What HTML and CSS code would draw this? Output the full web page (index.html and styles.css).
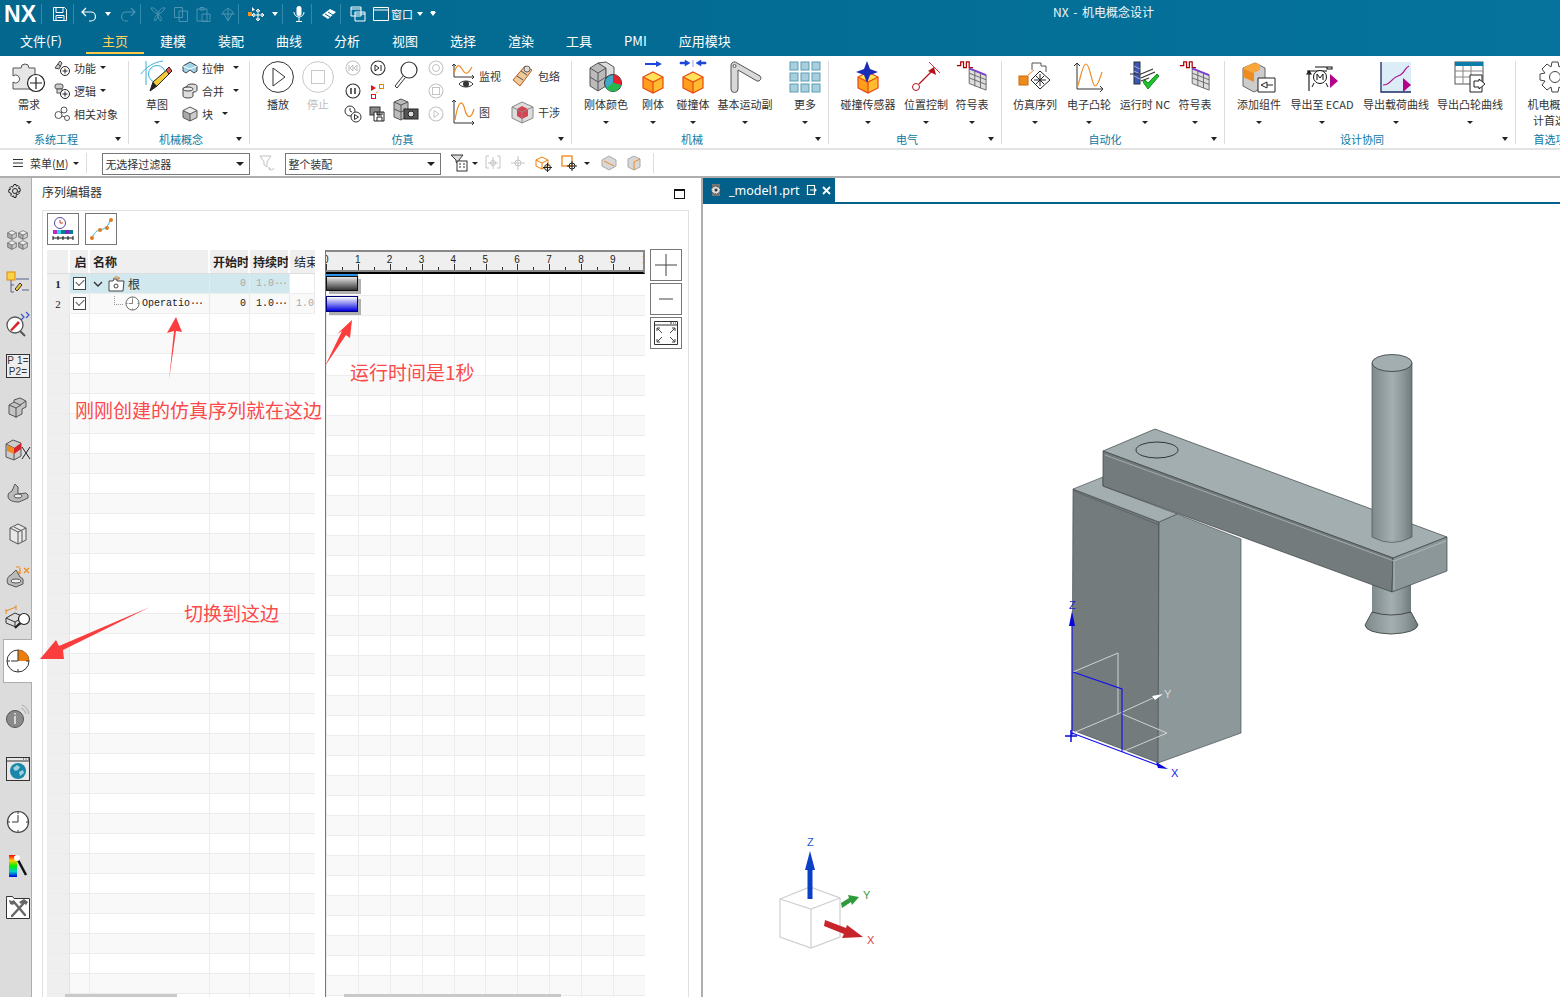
FILE: index.html
```html
<!DOCTYPE html>
<html lang="zh">
<head>
<meta charset="utf-8">
<title>NX - 机电概念设计</title>
<link rel="stylesheet" href="styles.css">
</head>
<body>
<svg class="defs" width="0" height="0">
  <defs>
    <linearGradient id="gy" x1="0" y1="0" x2="0" y2="1"><stop offset="0" stop-color="#ffe45c"/><stop offset="1" stop-color="#ff9a12"/></linearGradient>
    <linearGradient id="cyl" x1="0" y1="0" x2="1" y2="0"><stop offset="0" stop-color="#7d898b"/><stop offset=".5" stop-color="#a3afb1"/><stop offset=".75" stop-color="#8e9a9c"/><stop offset="1" stop-color="#6e7a7c"/></linearGradient>
    <linearGradient id="rain" x1="0" y1="0" x2="0" y2="1"><stop offset="0" stop-color="#f00"/><stop offset=".25" stop-color="#fc0"/><stop offset=".5" stop-color="#0e0"/><stop offset=".75" stop-color="#0cc"/><stop offset="1" stop-color="#00d"/></linearGradient>
    <symbol id="cube" viewBox="0 0 24 24"><path d="M12 2l10 5-10 5L2 7z" fill="#ffe25a"/><path d="M2 7l10 5v11L2 18z" fill="#ff9d1c"/><path d="M22 7l-10 5v11l10-5z" fill="#ffbc30"/><path d="M12 2l10 5v11l-10 5-10-5V7zM2 7l10 5 10-5M12 12v11" fill="none" stroke="#e9470f" stroke-width="1.2"/></symbol>
    <symbol id="graycube" viewBox="0 0 16 16"><path d="M8 1l7 3.500-7 3.500-7-3.500z" fill="#eee"/><path d="M1 4.500l7 3.500v7l-7-3.500z" fill="#aaa"/><path d="M15 4.500l-7 3.500v7l7-3.500z" fill="#ccc"/><path d="M8 1l7 3.500v7L8 15l-7-3.500v-7zM1 4.500l7 3.500 7-3.500M8 8v7" fill="none" stroke="#555"/></symbol>
    <symbol id="sym" viewBox="0 0 34 34"><path d="M1 6h4V2h3v6h3V2h3v6h4" fill="none" stroke="#a00" stroke-width="1.300"/><path d="M14 9l18 7v16l-18-7z" fill="#ddd" stroke="#666"/><path d="M14 9l18 7" stroke="#7a3fd0" stroke-width="2"/><path d="M14 14l18 7M14 19l18 7M20 11v17M26 14v16" stroke="#666" fill="none"/></symbol>
    <symbol id="clock" viewBox="0 0 24 24"><circle cx="12" cy="12" r="10.500" fill="#fff" stroke="#444" stroke-width="1.200"/><path d="M12 5v7H6M12 2v2M12 20v2M2 12h2M20 12h2" fill="none" stroke="#333"/></symbol>
    <symbol id="mini" viewBox="0 0 16 16"><circle cx="8" cy="8" r="7" fill="#fff" stroke="#333" stroke-width="1.100"/></symbol>
    <symbol id="minid" viewBox="0 0 16 16"><circle cx="8" cy="8" r="7" fill="#fff" stroke="#c4c4c4" stroke-width="1.100"/></symbol>
    <symbol id="ddcaret" viewBox="0 0 8 4"><path d="M0 0h8L4 4z" fill="#222"/></symbol>
  </defs>
</svg>

<header class="titlebar">
  <span class="nx">NX</span><i class="vsep"></i>
  <svg class="qa q-save" width="16" height="16" viewBox="0 0 16 16"><path d="M1.500 1.500h11l2 2v11h-13zM4 1.500v5h7v-5M4 14.500v-5h8v5M5.500 11.500h5" fill="none" stroke="#fff"/></svg>
  <i class="vsep v73"></i>
  <svg class="qa q-undo" width="16" height="14" viewBox="0 0 16 14"><path d="M5 1L1 5l4 4M1 5h9a4.500 4.500 0 010 9H8" fill="none" stroke="#fff" stroke-width="1.200"/></svg>
  <span class="wcaret c-undo"></span>
  <svg class="qa q-redo" width="16" height="14" viewBox="0 0 16 14"><path d="M11 1l4 4-4 4M15 5H6a4.500 4.500 0 000 9h2" fill="none" stroke="#4b93b2" stroke-width="1.200"/></svg>
  <i class="vsep v140"></i>
  <svg class="qa q-cut" width="16" height="16" viewBox="0 0 16 16"><path d="M8 8c3-1 6-3 7-6-3-1-6 2-7 6zM8 8C5 7 2 5 1 2c3-1 6 2 7 6zM8 8c-2 1-4 4-3 7 2-1 3-4 3-7zM8 8c2 1 4 4 3 7-2-1-3-4-3-7z" fill="none" stroke="#4b93b2"/></svg>
  <svg class="qa q-copy" width="16" height="16" viewBox="0 0 16 16"><path d="M1.500 1.500h8v10h-8zM6 5h8.500v10.500H6z" fill="none" stroke="#4b93b2"/></svg>
  <svg class="qa q-paste" width="16" height="16" viewBox="0 0 16 16"><path d="M2 3h10v12H2zM5 1.500h4V4H5zM7 8h8v7.500H7z" fill="none" stroke="#4b93b2"/></svg>
  <svg class="qa q-del" width="16" height="16" viewBox="0 0 16 16"><path d="M3 6l5-4 5 4-5 9zM1 8h14M8 2v13" fill="none" stroke="#4b93b2"/></svg>
  <i class="vsep v238"></i>
  <svg class="qa q-move" width="18" height="18" viewBox="0 0 18 18"><rect x="1" y="7" width="4" height="4" fill="#f7931e"/><path d="M5 2l3 3-3 1z" fill="#fff"/><path d="M11 4v12M5 10h12M11 4l-2 2h4zM11 16l-2-2h4zM5 10l2-2v4zM17 10l-2-2v4z" stroke="#fff" fill="#111"/></svg>
  <span class="wcaret c-move"></span>
  <i class="vsep v282"></i>
  <svg class="qa q-mic" width="12" height="18" viewBox="0 0 12 18"><rect x="3.500" y="1" width="5" height="10" rx="2.500" fill="#fff"/><path d="M1 7a5 5 0 0010 0M6 12v4M3 16.500h6" fill="none" stroke="#fff"/></svg>
  <i class="vsep v311"></i>
  <svg class="qa q-tape" width="16" height="12" viewBox="0 0 16 12"><path d="M1 7l8-6 6 3-8 7z" fill="#fff"/><path d="M4 6l5 3M7 4l5 3" stroke="#036e98"/></svg>
  <i class="vsep v340"></i>
  <svg class="qa q-win1" width="16" height="16" viewBox="0 0 16 16"><path d="M1 1h10v9H1zM5 6h10v9H5z" fill="#046f99" stroke="#fff"/><path d="M1 3h10M5 8h10" stroke="#fff"/></svg>
  <svg class="qa q-win2" width="16" height="16" viewBox="0 0 16 16"><path d="M.500 1.500h15v13H.500zM.500 4h15" fill="none" stroke="#fff"/></svg>
  <span class="win-label">窗口</span><span class="wcaret c-win"></span>
  <span class="wcaret c-more"></span>
  <span class="app-title">NX - 机电概念设计</span>
</header>

<nav class="menubar">
  <span class="tab first">文件(F)</span>
  <span class="tab active">主页</span>
  <span class="tab">建模</span><span class="tab">装配</span><span class="tab">曲线</span><span class="tab">分析</span><span class="tab">视图</span><span class="tab">选择</span><span class="tab">渲染</span><span class="tab">工具</span><span class="tab">PMI</span><span class="tab">应用模块</span>
</nav>

<section class="ribbon">
  <div class="group g1">
    <div class="gbody pl4">
      <div class="big w50">
        <svg class="ic" width="34" height="32" viewBox="0 0 34 32"><path d="M1 7h8a4 4 0 118 0h6v8a4 4 0 100 8v5H1v-7a4 4 0 100-6z" fill="#e6e6e6" stroke="#555"/><circle cx="24" cy="22" r="8.500" fill="#fff" stroke="#222" stroke-width="1.200"/><path d="M24 16v12M18 22h12" stroke="#222" stroke-width="1.200"/></svg>
        <span class="lab">需求</span><span class="caret"></span>
      </div>
      <div class="smalls">
        <div class="srow"><svg width="16" height="16" viewBox="0 0 16 16"><path d="M1 8l5-7 2 2-3 6zM4 4l3 3" fill="#ccc" stroke="#444"/><circle cx="11" cy="11" r="4.500" fill="#fff" stroke="#222"/><path d="M11 8.500v5M8.500 11h5" stroke="#222"/></svg><span class="slab">功能</span><span class="caret inl"></span></div>
        <div class="srow"><svg width="16" height="16" viewBox="0 0 16 16"><rect x="1" y="1" width="8" height="5" rx="2" fill="#ccc" stroke="#555"/><rect x="3" y="6" width="5" height="4" fill="#ddd" stroke="#555"/><circle cx="11" cy="11" r="4.500" fill="#fff" stroke="#222"/><path d="M11 8.500v5M8.500 11h5" stroke="#222"/></svg><span class="slab">逻辑</span><span class="caret inl"></span></div>
        <div class="srow"><svg width="16" height="16" viewBox="0 0 16 16"><circle cx="4.500" cy="9" r="3.500" fill="#fff" stroke="#555"/><circle cx="10" cy="4" r="3" fill="#fff" stroke="#555"/><circle cx="13" cy="12" r="2.500" fill="#fff" stroke="#555"/><path d="M7 7l1-1M8 10l3 1" stroke="#555"/></svg><span class="slab">相关对象</span></div>
      </div>
    </div>
    <div class="gfoot"><span class="gname">系统工程</span><span class="caret"></span></div>
  </div>

  <div class="group g2">
    <div class="gbody pl4">
      <div class="big w48">
        <svg class="ic" width="34" height="34" viewBox="0 0 34 34"><path d="M1 14C6 7 14 2 23 1M6 1v24" fill="none" stroke="#35b2d8"/><circle cx="17" cy="14" r="8.500" fill="none" stroke="#35b2d8"/><path d="M10 31l3-9 16-14 3 3-15 15z" fill="#f4c93a" stroke="#222"/><path d="M26 10l3-3 3 4-3 3z" fill="#e0525a" stroke="#222"/><path d="M10 31l3-9 4 4z" fill="#222"/></svg>
        <span class="lab">草图</span><span class="caret"></span>
      </div>
      <div class="smalls ml1">
        <div class="srow"><svg width="16" height="14" viewBox="0 0 16 14"><path d="M1 5l7-4 7 4v5l-3 2-4-3-4 3-3-2z" fill="#9fd3e8" stroke="#444"/><path d="M1 5l7 3 7-3" fill="none" stroke="#fff"/></svg><span class="slab">拉伸</span><span class="caret inl wide"></span></div>
        <div class="srow"><svg width="16" height="16" viewBox="0 0 16 16"><path d="M1 6v7c0 1 2 2 5 2s5-1 5-2V9h1c2 0 3-1 3-2V3c0-1-2-2-5-2S5 2 5 3v1C2 4 1 5 1 6z" fill="#ddd" stroke="#444"/><path d="M1 6c0 1 2 2 5 2s5-1 5-2c0-1-2-2-5-2S1 5 1 6z" fill="#eee" stroke="#444"/></svg><span class="slab">合并</span><span class="caret inl wide"></span></div>
        <div class="srow"><svg width="16" height="16"><use href="#graycube"/></svg><span class="slab">块</span><span class="caret inl wide"></span></div>
      </div>
    </div>
    <div class="gfoot"><span class="gname">机械概念</span><span class="caret"></span></div>
  </div>

  <div class="group g3">
    <div class="gbody pl8">
      <div class="big w40">
        <svg class="ic" width="32" height="32" viewBox="0 0 32 32"><circle cx="16" cy="16" r="15.400" fill="#fff" stroke="#333"/><path d="M11 7l12 9-12 9z" fill="#fff" stroke="#333"/></svg>
        <span class="lab">播放</span>
      </div>
      <div class="big w40">
        <svg class="ic" width="32" height="32" viewBox="0 0 32 32"><circle cx="16" cy="16" r="15.400" fill="#fff" stroke="#c8c8c8"/><rect x="9.500" y="9.500" width="13" height="13" fill="#fff" stroke="#c8c8c8"/></svg>
        <span class="lab dim">停止</span>
      </div>
      <div class="smalls mini-col ml2">
        <div class="srow mid"><svg width="16" height="16" viewBox="0 0 16 16"><use href="#minid"/><path d="M4 5v6M8 5L5 8l3 3zM12 5L9 8l3 3z" fill="none" stroke="#bbb"/></svg></div>
        <div class="srow mid"><svg width="16" height="16" viewBox="0 0 16 16"><use href="#mini"/><path d="M6 5v6M10 5v6" stroke="#222" stroke-width="1.400"/></svg></div>
        <div class="srow mid"><svg width="18" height="18" viewBox="0 0 18 18"><circle cx="6" cy="6" r="5" fill="#fff" stroke="#333"/><path d="M6 3v3l2 1" fill="none" stroke="#333"/><circle cx="12" cy="12" r="5" fill="#fff" stroke="#333"/><path d="M10.500 9.500l4 2.500-4 2.500z" fill="none" stroke="#333"/></svg></div>
      </div>
      <div class="smalls mini-col">
        <div class="srow mid"><svg width="16" height="16" viewBox="0 0 16 16"><use href="#mini"/><path d="M5 5l4 3-4 3zM11 5v6" fill="none" stroke="#222"/></svg></div>
        <div class="srow mid"><svg width="16" height="16" viewBox="0 0 16 16"><path d="M1 2l5 3-5 3z" fill="#e2141c"/><rect x="9.500" y="1.500" width="4" height="4" fill="#fff" stroke="#e88a00"/><rect x="1.500" y="11.500" width="4" height="4" fill="#fff" stroke="#e2141c"/><path d="M6 10l3-3" stroke="#e88a00" stroke-dasharray="1 1"/></svg></div>
        <div class="srow mid"><svg width="17" height="17" viewBox="0 0 17 17"><rect x="1" y="2" width="10" height="8" fill="#888" stroke="#333"/><path d="M5 7h10v9H5zM8 7v3h5V7M8 16v-4h5v4" fill="#fff" stroke="#222"/></svg></div>
      </div>
      <div class="tools-col">
        <svg width="26" height="30" viewBox="0 0 26 30"><circle cx="16" cy="10" r="8" fill="#fff" stroke="#333" stroke-width="1.200"/><path d="M10 16L2 26l2 2 8-10" fill="#fff" stroke="#333"/></svg>
        <svg width="26" height="24" viewBox="0 0 26 24"><path d="M1 5l7-3 7 3v14l-7 4-7-3z" fill="#bbb" stroke="#555"/><path d="M1 5l7 3 7-3M8 8v15M1 12l7 3 7-3" fill="none" stroke="#555"/><rect x="11" y="12" width="14" height="10" fill="#555" stroke="#222"/><circle cx="18" cy="17" r="3" fill="#ddd" stroke="#222"/></svg>
      </div>
      <div class="smalls mini-col">
        <div class="srow mid"><svg width="16" height="16" viewBox="0 0 16 16"><use href="#minid"/><circle cx="8" cy="8" r="3.500" fill="none" stroke="#c4c4c4"/></svg></div>
        <div class="srow mid"><svg width="16" height="16" viewBox="0 0 16 16"><use href="#minid"/><rect x="4.500" y="4.500" width="7" height="7" fill="none" stroke="#c4c4c4"/></svg></div>
        <div class="srow mid"><svg width="16" height="16" viewBox="0 0 16 16"><use href="#minid"/><path d="M6 4.500l5 3.500-5 3.500z" fill="none" stroke="#c4c4c4"/></svg></div>
      </div>
      <div class="pair-col ml3">
        <div class="prow"><svg width="24" height="26" viewBox="0 0 24 26"><path d="M3 1v13h20M1 3l2-2 2 2M21 12l2 2-2 2" fill="none" stroke="#333"/><path d="M3 10c3-9 5-9 8-4s5 7 10-2" fill="none" stroke="#ef8a1e" stroke-width="1.200"/><path d="M8 21c3-4 11-4 14 0-3 4-11 4-14 0z" fill="#fff" stroke="#333"/><circle cx="15" cy="21" r="3" fill="#333"/></svg><span class="slab">监视</span></div>
        <div class="prow"><svg width="24" height="26" viewBox="0 0 24 26"><path d="M3 1v23h20M1 3l2-2 2 2M21 22l2 2-2 2" fill="none" stroke="#333"/><path d="M4 21c4-24 8-18 10-10s6 10 9-1" fill="none" stroke="#ef8a1e" stroke-width="1.200"/></svg><span class="slab">图</span></div>
      </div>
      <div class="pair-col ml10">
        <div class="prow w2"><svg width="21" height="24" viewBox="0 0 21 24"><path d="M1 16L13 2l7 4L8 22z" fill="#f0c99a" stroke="#b85a1e"/><path d="M5 12l6 4M9 7l6 4" stroke="#555" fill="none"/><circle cx="15" cy="5" r="3" fill="#ddd" stroke="#666"/></svg><span class="slab">包络</span></div>
        <div class="prow w2"><svg width="23" height="22" viewBox="0 0 23 22"><path d="M1 6l10-5 11 5v11l-11 5-10-5z" fill="#ddd" stroke="#888"/><path d="M6 8l5-3 6 3v7l-6 3-5-3z" fill="#d8434f"/><path d="M1 6l10 5 11-5M11 11v11" fill="none" stroke="#888"/></svg><span class="slab">干涉</span></div>
      </div>
    </div>
    <div class="gfoot"><span class="gname">仿真</span><span class="caret"></span></div>
  </div>

  <div class="group g4">
    <div class="gbody pl10">
      <div class="big w48"><svg class="ic" width="34" height="32" viewBox="0 0 34 32"><path d="M1 7l8-5 8 5v18l-8 5-8-5z" fill="#bbb" stroke="#555"/><path d="M9 2l8-1 8 5v10H17V7z" fill="#ddd" stroke="#555"/><path d="M1 7l8 5 8-5M9 12v18M1 16l8 5 8-5" fill="none" stroke="#555"/><circle cx="24" cy="22" r="8.500" fill="#3fa9c9" stroke="#333"/><path d="M24 22V13.500A8.500 8.500 0 0132 24z" fill="#e8212f"/><path d="M24 22l8 2a8.500 8.500 0 01-15 3z" fill="#25b84a"/></svg><span class="lab">刚体颜色</span><span class="caret"></span></div>
      <div class="big w46"><svg class="ic" width="24" height="32" viewBox="0 0 24 32"><use href="#cube" y="9" width="24" height="24"/><path d="M4 2h11V0l6 3-6 3V4H4z" fill="#1c47d8"/></svg><span class="lab">刚体</span><span class="caret"></span></div>
      <div class="big w34"><svg class="ic" width="28" height="32" viewBox="0 0 28 32"><use href="#cube" x="2" y="9" width="24" height="24"/><path d="M1 1h5V-1l5 3-5 3V3H1zM27 1h-5V-1l-5 3 5 3V3h5zM14 -1v7" fill="#1c47d8" stroke="#1c47d8" stroke-width=".5"/></svg><span class="lab">碰撞体</span><span class="caret"></span></div>
      <div class="big w70"><svg class="ic" width="32" height="32" viewBox="0 0 32 32"><path d="M2 4a3.500 3.500 0 016-2l23 13a3 3 0 01-3 5L9 9v19a3.300 3.300 0 01-7 0z" fill="#d8d8d8" stroke="#555"/><circle cx="5.500" cy="5" r="1.500" fill="#fff" stroke="#555"/></svg><span class="lab">基本运动副</span><span class="caret"></span></div>
      <div class="big w44 ml3"><svg class="ic" width="32" height="32" viewBox="0 0 32 32"><g class="tiles"><rect x="1" y="1" width="8" height="8"/><rect x="12" y="1" width="8" height="8"/><rect x="23" y="1" width="8" height="8"/><rect x="1" y="12" width="8" height="8"/><rect x="12" y="12" width="8" height="8"/><rect x="23" y="12" width="8" height="8"/><rect x="1" y="23" width="8" height="8"/><rect x="12" y="23" width="8" height="8"/><rect x="23" y="23" width="8" height="8"/></g></svg><span class="lab">更多</span><span class="caret"></span></div>
    </div>
    <div class="gfoot"><span class="gname">机械</span><span class="caret"></span></div>
  </div>

  <div class="group g5">
    <div class="gbody pl10">
      <div class="big w58"><svg class="ic" width="26" height="32" viewBox="0 0 26 32"><use href="#cube" x="1" y="9" width="24" height="24"/><path d="M12 0l3 8 8 3-8 3-3 8-3-8-8-3 8-3z" fill="#1a2bb8"/></svg><span class="lab">碰撞传感器</span><span class="caret"></span></div>
      <div class="big w58"><svg class="ic" width="30" height="32" viewBox="0 0 30 32"><circle cx="5" cy="26" r="3.500" fill="#fff" stroke="#b3121a"/><path d="M8 23l14-14" stroke="#b3121a" stroke-width="1.300"/><path d="M23 6l2 8-8-4z" fill="#b3121a"/><path d="M18 1l11 11" stroke="#d9303a"/></svg><span class="lab">位置控制</span><span class="caret"></span></div>
      <div class="big w34"><svg class="ic" width="34" height="32"><use href="#sym" width="34" height="32"/></svg><span class="lab">符号表</span><span class="caret"></span></div>
    </div>
    <div class="gfoot"><span class="gname">电气</span><span class="caret"></span></div>
  </div>

  <div class="group g6">
    <div class="gbody pl8">
      <div class="big w50"><svg class="ic" width="34" height="32" viewBox="0 0 34 32"><rect x="1" y="15" width="9" height="9" fill="#ef8a1e" stroke="#c96a0a"/><path d="M10 14l6-5" stroke="#ef8a1e"/><path d="M14 9V2h9v3h5v6" fill="none" stroke="#555"/><path d="M22 10l10 9-10 9-9-9z" fill="#fff" stroke="#222"/><path d="M22 13v12M16 19h12M18 15l8 8M26 15l-8 8" stroke="#222"/></svg><span class="lab">仿真序列</span><span class="caret"></span></div>
      <div class="big w58"><svg class="ic" width="32" height="32" viewBox="0 0 32 32"><path d="M4 2v26h26M1 5l3-3 3 3M27 25l3 3-3 3" fill="none" stroke="#333"/><path d="M4 26c3-4 5-23 9-23s6 22 9 22 5-8 7-14" fill="none" stroke="#ef8a1e" stroke-width="1.200"/></svg><span class="lab">电子凸轮</span><span class="caret"></span></div>
      <div class="big w54"><svg class="ic" width="32" height="32" viewBox="0 0 32 32"><rect x="5" y="1" width="6" height="22" fill="#3f55b8" stroke="#233"/><path d="M5 5l6 3M5 10l6 3M5 15l6 3" stroke="#aac"/><path d="M1 13h11l12-5M12 17l14-6M12 20l8-3" stroke="#333" fill="none" stroke-width="1.200"/><path d="M14 21l5 7 11-13-2-2-9 9-3-3z" fill="#20c030" stroke="#109020"/></svg><span class="lab">运行时 NC</span><span class="caret"></span></div>
      <div class="big w46"><svg class="ic" width="34" height="32"><use href="#sym" width="34" height="32"/></svg><span class="lab">符号表</span><span class="caret"></span></div>
    </div>
    <div class="gfoot"><span class="gname">自动化</span><span class="caret"></span></div>
  </div>

  <div class="group g7">
    <div class="gbody pl8">
      <div class="big w52"><svg class="ic" width="34" height="32" viewBox="0 0 34 32"><path d="M1 7l12-5 10 5v18l-11 6-11-6z" fill="#ccc" stroke="#666"/><path d="M1 7l11 5v9l-11-5z" fill="#ef8a1e"/><path d="M12 12l6-3v-6l-7-1-10 5z" fill="#f8a53a"/><path d="M16 17h17v14H16z" fill="#fff" stroke="#222"/><path d="M31 24H25v-3l-6 3 6 3v-3" fill="#fff" stroke="#222"/></svg><span class="lab">添加组件</span><span class="caret"></span></div>
      <div class="big w74"><svg class="ic" width="32" height="30" viewBox="0 0 32 30"><path d="M1 9h20M9 5h12M21 5h5v2h-5zM3 9v20M1 12l2-3 2 3z" fill="none" stroke="#111" stroke-width="1.100"/><circle cx="14" cy="15" r="6.500" fill="#fff" stroke="#111"/><path d="M11 18v-6l3 4 3-4v6" fill="none" stroke="#111"/><path d="M8 21l-2 4M20 21l2 4" stroke="#111"/><path d="M24 12l8 7-8 7z" fill="#b5008a"/></svg><span class="lab">导出至 ECAD</span><span class="caret"></span></div>
      <div class="big w74"><svg class="ic" width="32" height="32" viewBox="0 0 32 32"><rect x="1" y="1" width="30" height="30" fill="#dcedf7"/><path d="M1 1v30h30" fill="none" stroke="#1a2a66" stroke-width="1.300"/><path d="M3 24c8 0 8-7 15-9s6-8 11-10" fill="none" stroke="#a8148c" stroke-width="1.200"/><path d="M23 17l8 7-8 7z" fill="#b5008a"/></svg><span class="lab">导出载荷曲线</span><span class="caret"></span></div>
      <div class="big w74"><svg class="ic" width="32" height="32" viewBox="0 0 32 32"><rect x="1" y="1" width="28" height="22" fill="#fff" stroke="#555"/><rect x="1" y="1" width="28" height="4" fill="#0a7ea8"/><path d="M1 10h28M1 16h28M9 5v18M17 5v18" stroke="#888"/><path d="M16 14h12v17H16z" fill="#fff" stroke="#222"/><path d="M20 20h5v-2l6 5-6 5v-2h-5z" fill="#fff" stroke="#222"/></svg><span class="lab">导出凸轮曲线</span><span class="caret"></span></div>
    </div>
    <div class="gfoot"><span class="gname">设计协同</span><span class="caret"></span></div>
  </div>

  <div class="group g8">
    <div class="gbody pl8">
      <div class="big w62"><svg class="ic" width="32" height="32" viewBox="0 0 32 32"><path d="M13 1h6l1 5 4-3 5 5-3 4 5 1v6l-5 1 3 4-5 5-4-3-1 5h-6l-1-5-4 3-5-5 3-4-5-1v-6l5-1-3-4 5-5 4 3z" fill="#fff" stroke="#444"/><circle cx="16" cy="16" r="5.500" fill="#fff" stroke="#444"/></svg><span class="lab two">机电概念设<br>计首选项</span></div>
    </div>
    <div class="gfoot"><span class="gname">首选项</span></div>
  </div>
</section>

<section class="toolbar">
  <svg class="burger" width="10" height="8" viewBox="0 0 10 8"><path d="M0 .500h10M0 4h10M0 7.500h10" stroke="#333"/></svg>
  <span class="menu-label">菜单(<u>M</u>)</span><span class="caret tcaret"></span>
  <i class="tsep"></i>
  <div class="select s1"><span>无选择过滤器</span><svg width="8" height="4"><use href="#ddcaret"/></svg></div>
  <svg class="tb-i t-filter" width="16" height="16" viewBox="0 0 16 16"><path d="M1 1h11L8 7v5L5 10V7z" fill="#fff" stroke="#c0c0c0"/><path d="M15 13a3 3 0 01-5 1M10 12v2h2" fill="none" stroke="#c0c0c0"/></svg>
  <div class="select s2"><span>整个装配</span><svg width="8" height="4"><use href="#ddcaret"/></svg></div>
  <svg class="tb-i t-list" width="18" height="18" viewBox="0 0 18 18"><path d="M1 1h12L9 6v5L6 8V6z" fill="#ddd" stroke="#333"/><rect x="7" y="7" width="10" height="10" fill="#fff" stroke="#333"/><path d="M9 10h2M13 10h2M9 13h2M13 13h2" stroke="#333"/></svg>
  <span class="caret tc2"></span>
  <svg class="tb-i t-a" width="16" height="16" viewBox="0 0 16 16"><path d="M1 1v12h3M15 1v12h-3M1 1h3M15 1h-3M8 2v12M3 8h10" fill="none" stroke="#c4c4c4"/><circle cx="8" cy="8" r="2.500" fill="none" stroke="#c4c4c4"/></svg>
  <svg class="tb-i t-b" width="16" height="16" viewBox="0 0 16 16"><path d="M8 1v14M1 8h14" stroke="#c4c4c4"/><circle cx="8" cy="8" r="3" fill="none" stroke="#c4c4c4"/></svg>
  <svg class="tb-i t-c" width="17" height="17" viewBox="0 0 17 17"><path d="M1 5l6-3 6 3v6l-6 3-6-3zM1 5l6 3 6-3M7 8v6" fill="#fff" stroke="#ef7d00"/><circle cx="12.500" cy="12.500" r="3" fill="none" stroke="#222"/><path d="M12.500 8v9M8 12.500h9" stroke="#222"/></svg>
  <svg class="tb-i t-d" width="17" height="17" viewBox="0 0 17 17"><rect x="1" y="1" width="10" height="10" fill="#fff" stroke="#ef7d00" stroke-width="1.200"/><circle cx="11" cy="11" r="3" fill="none" stroke="#222"/><path d="M11 6v10M6 11h10" stroke="#222"/></svg>
  <span class="caret tc3"></span>
  <svg class="tb-i t-e" width="16" height="16" viewBox="0 0 16 16"><path d="M1 5l7-4 7 4v6l-7 4-7-4z" fill="#d8d8d8" stroke="#aaa"/><path d="M3 6l10 5" stroke="#ef8a1e"/></svg>
  <svg class="tb-i t-f" width="14" height="16" viewBox="0 0 14 16"><path d="M1 4l6-3 6 3v8l-6 3-6-3z" fill="#d8d8d8" stroke="#aaa"/><path d="M7 7v8M7 7l6-3" stroke="#ef8a1e" fill="none"/></svg>
  <i class="tsep t-last"></i>
</section>

<main class="main">
  <aside class="sidebar">
    <div class="s-cell c-gear"><svg width="14" height="14" viewBox="0 0 14 14"><path d="M6 .500h2l.4 1.700 1.500-.8 1.400 1.400-.8 1.500 1.700.4v2.600l-1.700.4.800 1.500-1.400 1.400-1.500-.8L8 13.500H6l-.4-1.700-1.500.8-1.400-1.400.8-1.500L.8 8.300V5.700l1.700-.4-.8-1.500 1.400-1.400 1.500.8z" fill="#ddd" stroke="#222"/><circle cx="7" cy="7" r="2.500" fill="#ddd" stroke="#222"/></svg></div>
    <div class="s-cell"><svg width="22" height="20" viewBox="0 0 22 20"><use href="#graycube" width="10" height="10"/><use href="#graycube" x="11" width="10" height="10"/><use href="#graycube" y="10" width="10" height="10"/><use href="#graycube" x="11" y="10" width="10" height="10"/></svg></div>
    <div class="s-cell"><svg width="24" height="24" viewBox="0 0 24 24"><rect x="1" y="2" width="8" height="8" fill="#f8d24a" stroke="#e08a00"/><path d="M5 10v12h3M5 15h3M10 9h13M16 20h7" stroke="#55608a" fill="none"/><path d="M9 19l5-6 2 2-5 6z" fill="#f0c63a" stroke="#333"/></svg></div>
    <div class="s-cell"><svg width="26" height="26" viewBox="0 0 26 26"><circle cx="10" cy="14" r="8" fill="#fff" stroke="#555" stroke-width="1.300"/><path d="M5 19l8-9 2 2-8 8z" fill="#d8232c"/><path d="M15 20l5 5" stroke="#555" stroke-width="2"/><path d="M16 3l3 3-3 3M21 1l3 3-3 3" fill="none" stroke="#3a55c8" stroke-width="1.200"/></svg></div>
    <div class="s-cell"><span class="p12">P 1=<br>P2=</span></div>
    <div class="s-cell"><svg width="20" height="22" viewBox="0 0 20 22"><path d="M1 8l5-3v-2l6-2 6 3v6l-4 2v5l-6 3-7-3z" fill="#c4c4c4" stroke="#555"/><path d="M1 8l7 3v10M8 11l5-3M6 5l6 3 6-4" fill="none" stroke="#555"/></svg></div>
    <div class="s-cell"><svg width="26" height="24" viewBox="0 0 26 24"><path d="M1 6l7-4 8 3v13l-7 4-8-3z" fill="#ccc" stroke="#555"/><path d="M1 6l8 4v12" fill="none" stroke="#555"/><path d="M2 7l7 3v6l-7-3z" fill="#ef8a1e"/><path d="M9 10l7-5v6l-7 5z" fill="#d8232c"/><path d="M17 9l8 12M25 9l-8 12" stroke="#222"/></svg></div>
    <div class="s-cell"><svg width="22" height="20" viewBox="0 0 22 20"><path d="M1 14c0-3 2-4 4-5l3-7 3 3v7l8-1 2 2v3l-9 4c-5 0-11-1-11-6z" fill="#bbb" stroke="#555"/><ellipse cx="11" cy="14" rx="4" ry="2" fill="#eee" stroke="#555"/></svg></div>
    <div class="s-cell"><svg width="20" height="22" viewBox="0 0 20 22"><path d="M2 5l8-4 8 4v12l-8 4-8-4z" fill="#e8e8e8" stroke="#555"/><path d="M2 5l8 4 8-4M10 9v12M6 4l8 4v11" fill="none" stroke="#555"/></svg></div>
    <div class="s-cell"><svg width="24" height="24" viewBox="0 0 24 24"><path d="M2 20c-2-4 0-8 3-9l5-5 4 7 3 2v5l-7 3z" fill="#bbb" stroke="#555"/><ellipse cx="10" cy="17" rx="5" ry="2" fill="#eee" stroke="#555"/><path d="M11 7l3 3M14 10V4M18 4l5 5M23 4l-5 5M10 3h4" stroke="#ef8a1e" fill="none" stroke-width="1.200"/></svg></div>
    <div class="s-cell"><svg width="26" height="24" viewBox="0 0 26 24"><path d="M1 12l9-5 9 4v5l-8 5-10-4z" fill="#ddd" stroke="#333"/><path d="M1 12l9 4 9-5M10 16v5" fill="none" stroke="#333"/><path d="M1 5l10-4M1 3v5M11-1v5" stroke="#ef8a1e"/><circle cx="19" cy="13" r="5.500" fill="#fff" stroke="#222" stroke-width="1.200"/><path d="M15 17l-5 5" stroke="#222" stroke-width="2"/></svg></div>
    <div class="s-cell s-active"><svg width="24" height="24" viewBox="0 0 24 24"><circle cx="12" cy="12" r="11" fill="#fff" stroke="#333"/><path d="M12 12V1a11 11 0 0111 11z" fill="#ef7d0a"/><path d="M12 1v11H5M12 20v3M1 12h3M20 12h3" fill="none" stroke="#333"/></svg></div>
    <div class="s-cell c-info"><svg width="24" height="24" viewBox="0 0 24 24"><path d="M15 3a8 8 0 015 6M16 0a12 12 0 017 9" fill="none" stroke="#aaa"/><circle cx="9" cy="14" r="8.500" fill="#8a8a8a" stroke="#555"/><path d="M9 11v8M9 8v1.500" stroke="#fff" stroke-width="1.300"/></svg></div>
    <div class="s-cell c-globe"><svg width="24" height="24" viewBox="0 0 24 24"><rect x=".500" y=".500" width="23" height="23" fill="#e8e8e8" stroke="#333"/><path d="M0 4h24M17 2h1M19.500 2h1M22 2h1" stroke="#333"/><circle cx="12" cy="14" r="8" fill="#1a87a8"/><path d="M7 11l4-3 3 2-2 3-3 1zM13 15l4-2 1 3-4 3z" fill="#9ed2e0"/></svg></div>
    <div class="s-cell c-clock"><svg width="24" height="24"><use href="#clock"/></svg></div>
    <div class="s-cell c-rain"><svg width="22" height="24" viewBox="0 0 22 24"><rect x="2" y="1" width="8" height="22" fill="url(#rain)"/><path d="M11 6l8 15" stroke="#111" stroke-width="2.500"/><circle cx="10" cy="4" r="3" fill="#fff"/></svg></div>
    <div class="s-cell c-tools"><svg width="24" height="24" viewBox="0 0 24 24"><path d="M.500 2.500V.500h6l1.500 2h15.500v20H.500z" fill="#fff" stroke="#333"/><path d="M6 20l11-12M8 6l11 13" stroke="#666" stroke-width="2.400" stroke-linecap="round"/><path d="M3 4l3 1 2-1 1 2-2 3-3-1zM13 6l5-3 4 3-2 3-3-2-2 1z" fill="#666"/></svg></div>
  </aside>

  <section class="panel">
    <div class="panel-head"><span>序列编辑器</span><i class="max-btn"></i></div>
    <div class="panel-box">
      <div class="seq-tools">
        <button class="tool" type="button"><svg width="26" height="26" viewBox="0 0 26 26"><circle cx="10" cy="7" r="5.500" fill="#fff" stroke="#5a4aa0"/><path d="M10 4v3h3" fill="none" stroke="#c0392b"/><path d="M3 14h4v4H3z" fill="#c026d3"/><path d="M7 14h4v4H7z" fill="#22d3ee"/><path d="M11 14h4v4h-4z" fill="#0e7c86"/><path d="M15 14h4v4h-4z" fill="#7e22ce"/><path d="M19 14h4v4h-4z" fill="#0e7c86"/><path d="M3 22h20M3 20v4M8 20v4M13 20v4M18 20v4M23 20v4" stroke="#111"/></svg></button>
        <button class="tool" type="button"><svg width="26" height="26" viewBox="0 0 26 26"><path d="M4 22c2-5 4-7 8-8s7-2 10-9" fill="none" stroke="#22b8d8"/><circle cx="4" cy="22" r="2" fill="#e07a1e"/><circle cx="12" cy="14" r="2" fill="#e07a1e"/><circle cx="19" cy="12" r="2" fill="#e07a1e"/><circle cx="23" cy="4" r="2" fill="#e07a1e"/></svg></button>
      </div>
      <div class="seq-body">
        <div class="grid">
          <div class="row head"><span class="c0"></span><span class="c1">启</span><span class="c2">名称</span><span class="c3">开始时</span><span class="c4">持续时</span><span class="c5">结束</span></div>
          <div class="row sel">
            <span class="c0 b">1</span><span class="c1"><i class="chk"></i></span>
            <span class="c2 tree"><svg class="chev" width="10" height="6" viewBox="0 0 10 6"><path d="M1 1l4 4 4-4" fill="none" stroke="#333" stroke-width="1.400"/></svg><svg width="17" height="16" viewBox="0 0 17 16"><path d="M1 15V5h4l1-2h3v2h7l-1 10z" fill="#fff" stroke="#444"/><path d="M5 3c2-3 5-3 6 0M11 3l-2 0M11 3V1" fill="none" stroke="#e07a1e"/><circle cx="8" cy="10" r="2" fill="#fff" stroke="#444"/></svg><span class="root">根</span></span>
            <span class="c3 num dimnum">0</span><span class="c4 mono dimnum">1.0<span class="ell">···</span></span><span class="c5 blank"></span>
          </div>
          <div class="row alt">
            <span class="c0">2</span><span class="c1"><i class="chk"></i></span>
            <span class="c2 tree leaf"><i class="dots"></i><svg width="15" height="15"><use href="#clock" width="15" height="15"/></svg><span class="mono op">Operatio<span class="ell">···</span></span></span>
            <span class="c3 num">0</span><span class="c4 mono">1.0<span class="ell">···</span></span><span class="c5 mono dimnum">1.0</span>
          </div>
          <div class="grid-fill"></div>
          <div class="hscroll h1"></div>
        </div>
        <div class="timeline">
          <div class="ruler">
            <span>0</span><span>1</span><span>2</span><span>3</span><span>4</span><span>5</span><span>6</span><span>7</span><span>8</span><span>9</span><span>1</span>
          </div>
          <div class="tl-fill">
            <div class="bar b-gray"></div>
            <div class="bar b-blue"></div>
          </div>
          <div class="hscroll h2"></div>
        </div>
        <div class="zoom-col">
          <button class="tool" type="button"><svg width="22" height="22" viewBox="0 0 22 22"><path d="M11 0v22M0 11h22" stroke="#444"/></svg></button>
          <button class="tool" type="button"><svg width="14" height="2" viewBox="0 0 14 2"><path d="M0 1h14" stroke="#444"/></svg></button>
          <button class="tool" type="button"><svg width="24" height="24" viewBox="0 0 24 24"><path d="M.500 .500h23v23H.500zM0 4h24M16 2h2M19 2h1M21 2h1" fill="none" stroke="#333"/><path d="M3 7l5 5M3 7h3M3 7v3M21 7l-5 5M21 7h-3M21 7v3M3 21l5-5M3 21h3M3 21v-3M21 21l-5-5M21 21h-3M21 21v-3" fill="none" stroke="#444"/></svg></button>
        </div>
      </div>
    </div>
  </section>

  <section class="view">
    <div class="doc-tabs"><div class="doc-tab">
      <svg width="14" height="14" viewBox="0 0 14 14"><path d="M3 1h8v12H3z" fill="#777"/><path d="M7 2.500l1 1.500 1.800-.3.500 1.700 1.400 1-1 1.400.3 1.700-1.800.4L8 11.500 7 10.500 5 11.200l-.8-1.500-1.700-.4.400-1.700L1.800 6.200l1.600-1 .4-1.700 1.700.3z" fill="#ddd" stroke="#333" stroke-width=".6"/><circle cx="7" cy="7" r="1.500" fill="#333"/></svg>
      <span class="doc-name">_model1.prt</span>
      <svg class="doc-pop" width="10" height="10" viewBox="0 0 10 10"><path d="M8.500 4V.500h-7v9h7V7M4 5h6M8 3l2 2-2 2" fill="none" stroke="#fff" stroke-width="1.200"/></svg>
      <svg class="doc-x" width="9" height="9" viewBox="0 0 9 9"><path d="M1 1l7 7M8 1L1 8" stroke="#fff" stroke-width="1.800"/></svg>
    </div></div>
    <div class="canvas">
      <svg class="model" width="857" height="793" viewBox="703 204 857 793">
        <path d="M1073 489L1159 522V763L1072 730z" fill="#737b7d" stroke="#3c4244" stroke-width=".6"/>
        <path d="M1159 522L1177 514 1241 539V733L1158 763z" fill="#8c989a" stroke="#3c4244" stroke-width=".6"/>
        <path d="M1073 489L1103 477V486L1177 514 1159 522z" fill="#a2aeb0" stroke="#3c4244" stroke-width=".6"/>
        <path d="M1074 491L1159 525" stroke="#4d5557" stroke-width=".6" fill="none"/>
        <path d="M1372 580H1411V615H1372z" fill="url(#cyl)"/>
        <path d="M1372 612Q1391 618 1411 612L1418 625Q1416 633 1391 634 1366 633 1365 625z" fill="url(#cyl)" stroke="#333" stroke-width=".8"/>
        <path d="M1103 451L1155 429 1447 537 1393 558z" fill="#a2aeb0" stroke="#3c4244" stroke-width=".7"/>
        <path d="M1103 451L1393 558 1392 592 1103 486z" fill="#737b7d" stroke="#3c4244" stroke-width=".7"/>
        <path d="M1393 558L1447 537V571L1392 592z" fill="#8b9799" stroke="#3c4244" stroke-width=".7"/>
        <path d="M1105 455L1394 561V590M1394 561L1446 541" fill="none" stroke="#c4cccd" stroke-width=".6"/>
        <ellipse cx="1157" cy="450" rx="21" ry="8" fill="#a2aeb0" stroke="#30383a"/>
        <path d="M1372 363H1412V537Q1392 548 1372 537z" fill="url(#cyl)" stroke="#50585a" stroke-width=".7"/>
        <ellipse cx="1392" cy="363" rx="20" ry="8.500" fill="#a2aeb0" stroke="#30383a" stroke-width=".8"/>
        <path d="M1073 672L1118 653V714M1118 714L1073 733M1122 714L1167 733 1122 752M1118 714L1153 698" fill="none" stroke="#d2d2d2"/>
        <path d="M1163 694L1152 696 1155 700z" fill="#fff"/>
        <path d="M1072 735V617M1073 672L1122 689V752M1072 733L1160 766" fill="none" stroke="#1010ee" stroke-width="1.100"/>
        <path d="M1072 611L1069 626H1075z" fill="#0808d8"/>
        <path d="M1168 769L1156 762 1158 768z" fill="#0808d8"/>
        <path d="M1065 736H1077M1071 730V742" stroke="#0808d8" stroke-width="1.500"/>
        <path d="M780 899L810 887 840 898V937L811 948 780 937zM780 899L811 909 840 898M811 909V948" fill="none" stroke="#cfcfcf" stroke-width="1.200"/>
        <path d="M807.500 899V870H805L810 851 815 870H812.500V899z" fill="#0a3fc8"/>
        <path d="M841 903L849 898 848 895 859 897 852 905 851 902 842 908z" fill="#2f9a3a"/>
        <path d="M825 920L846 928 847 925 863 937 842 938 844 934 824 926z" fill="#c8242c"/>
      </svg>
      <span class="axis ax-z1">Z</span><span class="axis ax-y1">Y</span><span class="axis ax-x1">X</span>
      <span class="axis tr-z">Z</span><span class="axis tr-y">Y</span><span class="axis tr-x">X</span>
    </div>
  </section>
</main>

<svg class="arrows" width="400" height="700" viewBox="0 0 400 700">
  <path d="M169 380L174 331 167 333 176 317 182 332 176 331z"/>
  <path d="M325 366L342 331 337 334 352 320 350 338 346 335z"/>
  <path d="M150 607L59 646 56 640 40 659 64 659 63 650z"/>
</svg>
<span class="note n1">刚刚创建的仿真序列就在这边</span>
<span class="note n2">运行时间是1秒</span>
<span class="note n3">切换到这边</span>
</body>
</html>
```
FILE: styles.css
```css
* { box-sizing: border-box; }
html, body { margin: 0; height: 997px; width: 1560px; overflow: hidden; background: #fff; }
body { position: relative; font: 11px/14px "Noto Sans CJK SC", "Noto Sans", sans-serif; color: #333; }
.defs { position: absolute; }
svg { display: block; flex: none; overflow: visible; }

/* title bar */
.titlebar { height: 28px; display: flex; align-items: center; position: relative; background: linear-gradient(90deg, #03678e, #05739c); color: #fff; }
.nx { margin-left: 4px; width: 32px; font: 700 23px/28px "Liberation Sans", sans-serif; letter-spacing: .2px; }
.vsep { width: 1px; height: 20px; background: #2f8aae; margin-left: 5px; }
.titlebar .vsep.v73 { position: absolute; left: 73px; margin: 0; }
.titlebar .vsep.v140 { position: absolute; left: 140px; margin: 0; }
.titlebar .vsep.v238 { position: absolute; left: 238px; margin: 0; }
.titlebar .vsep.v282 { position: absolute; left: 282px; margin: 0; }
.titlebar .vsep.v311 { position: absolute; left: 311px; margin: 0; }
.titlebar .vsep.v340 { position: absolute; left: 340px; margin: 0; }
.qa { margin-left: 10px; }
.q-undo { margin-left: 13px; }
.wcaret { width: 0; height: 0; border: 3px solid transparent; border-top: 4px solid #fff; border-bottom: 0; margin-left: 9px; flex: none; }
.c-undo { margin-left: 8px; }
.q-redo { margin-left: 9px; }
.q-cut { margin-left: 14px; }
.q-copy { margin-left: 7px; }
.q-paste { margin-left: 6px; }
.q-del { margin-left: 9px; }
.q-move { margin-left: 11px; }
.c-move { margin-left: 7px; }
.q-mic { margin-left: 15px; }
.q-tape { margin-left: 16px; }
.q-win1 { margin-left: 13px; }
.q-win2 { margin-left: 7px; }
.win-label { margin-left: 2px; font-size: 11px; }
.c-win { margin-left: 4px; }
.c-more { margin-left: 7px; box-shadow: 0 -2px 0 -1px #fff; }
.app-title { position: absolute; left: 1053px; top: 5px; font-size: 12px; color: #f2f7fa; word-spacing: 2px; }

/* menu tabs */
.menubar { height: 28px; display: flex; background: linear-gradient(90deg, #03678e, #05739c); color: #fff; font-size: 13px; line-height: 26px; }
.tab { padding: 0 16px; height: 26px; }
.tab.first { margin-left: 4px; padding-right: 24px; }
.tab.active { color: #ffd25e; border-bottom: 2px solid #ffc845; height: 26px; }

/* ribbon */
.ribbon { height: 94px; display: flex; background: #fff; border-bottom: 2px solid #e3e3e3; overflow: hidden; }
.group { flex: none; position: relative; display: flex; flex-direction: column; }
.group::after { content: ""; position: absolute; right: 0; top: 5px; bottom: 4px; width: 1px; background: #dcdcdc; }
.g1 { width: 129px; } .g2 { width: 121px; } .g3 { width: 322px; } .g4 { width: 257px; }
.g5 { width: 173px; } .g6 { width: 223px; } .g7 { width: 291px; } .g8 { width: 68px; }
.gbody { height: 75px; display: flex; }
.pl4 { padding-left: 4px; } .pl8 { padding-left: 8px; } .pl10 { padding-left: 10px; }
.ml1 { margin-left: 1px; } .ml2 { margin-left: 2px; } .ml3 { margin-left: 3px; } .ml10 { margin-left: 10px; }
.gfoot { height: 16px; display: flex; align-items: center; color: #0b7aa3; }
.gname { flex: 1; text-align: center; }
.caret { display: block; flex: none; width: 0; height: 0; border: 3px solid transparent; border-top: 3px solid #222; border-bottom: 0; }
.gfoot .caret { width: 17px; height: 6px; border: 0; background: none; position: relative; }
.gfoot .caret::before { content: ""; position: absolute; left: 3px; top: 1px; border: 3.500px solid transparent; border-top: 4px solid #222; border-bottom: 0; }
.big { flex: none; display: flex; flex-direction: column; align-items: center; }
.big .ic { height: 34px; margin-top: 4px; margin-bottom: 2px; flex: none; }
.w34 { width: 34px; } .w40 { width: 40px; } .w44 { width: 44px; } .w46 { width: 46px; } .w48 { width: 48px; } .w50 { width: 50px; }
.w52 { width: 52px; } .w54 { width: 54px; } .w58 { width: 58px; } .w62 { width: 62px; } .w70 { width: 70px; } .w74 { width: 74px; }
.lab { margin-top: 1px; white-space: nowrap; text-align: center; height: 14px; }
.lab.two { height: 28px; line-height: 16px; margin-top: 0; }
.lab.dim { color: #bdbdbd; }
.big .caret { margin-top: 10px; }
.smalls { flex: none; display: flex; flex-direction: column; }
.srow { height: 23px; display: flex; align-items: center; }
.slab { margin-left: 4px; white-space: nowrap; }
.caret.inl { margin-left: 4px; }
.caret.inl.wide { margin-left: 9px; }
.mini-col { width: 25px; }
.mid { justify-content: center; }
.tools-col { width: 34px; display: flex; flex-direction: column; align-items: center; padding-top: 4px; gap: 7px; margin-left: -1px; }
.pair-col { display: flex; flex-direction: column; flex: none; padding-top: 2px; }
.prow { height: 36px; display: flex; align-items: center; }
.prow.w2 svg { width: 23px; }
.tiles rect { fill: #a7cfdd; stroke: #5d9db4; }

/* toolbar */
.toolbar { height: 28px; position: relative; display: flex; align-items: center; background: #fff; border-bottom: 2px solid #aeaeae; }
.burger { margin-left: 13px; }
.menu-label { margin-left: 7px; white-space: nowrap; }
.tcaret { margin-left: 5px; }
.tsep { width: 1px; height: 20px; background: #ddd; margin-left: 7px; flex: none; }
.select { height: 22px; margin-top: 1px; border: 1px solid #777; padding: 0 5px 0 2px; display: flex; justify-content: space-between; align-items: center; background: #fff; flex: none; }
.s1 { width: 148px; margin-left: 15px; }
.s2 { width: 156px; margin-left: 10px; }
.tb-i { margin-left: 9px; }
.tc2 { margin-left: 4px; }
.t-a { margin-left: 7px; }
.tc3 { margin-left: 6px; }
.t-e { margin-left: 11px; }
.t-f { margin-left: 10px; }
.t-last { margin-left: 12px; }

/* main */
.main { display: flex; height: 819px; overflow: hidden; }
.sidebar { width: 32px; flex: none; background: #dcdcdc; border-right: 1px solid #aeaeae; display: flex; flex-direction: column; }
.s-cell { height: 42px; display: flex; align-items: center; justify-content: center; flex: none; padding-left: 5px; }
.c-gear { height: 26px; margin-bottom: 15px; padding-left: 0; padding-right: 1px; }
.s-active { height: 44px; margin-left: 3px; margin-right: -1px; padding-left: 0; background: #fff; border: 1px solid #aeaeae; border-right: 0; position: relative; }
.c-info { margin-top: 8px; height: 52px; }
.c-globe { height: 52px; }
.c-clock { height: 54px; }
.c-rain { height: 34px; }
.c-tools { height: 50px; }
.p12 { width: 24px; height: 24px; border: 1px solid #333; background: #eee; font: 10px/10.500px "Liberation Sans", sans-serif; text-align: center; letter-spacing: .2px; padding-top: 1px; white-space: nowrap; overflow: hidden; }

.panel { width: 671px; flex: none; padding-left: 10px; border-right: 2px solid #aeaeae; display: flex; flex-direction: column; }
.panel-head { height: 32px; display: flex; align-items: center; justify-content: space-between; font-size: 12px; padding: 0 16px 4px 0; }
.max-btn { width: 11px; height: 10px; border: 1px solid #111; border-top-width: 2px; margin-top: 3px; }
.panel-box { width: 647px; flex: 1; border: 1px solid #e0e0e0; border-bottom: 0; padding: 2px 0 0 4px; min-height: 0; overflow: hidden; }
.seq-tools { display: flex; gap: 6px; height: 32px; }
.tool { width: 32px; height: 32px; padding: 0; border: 1px solid #777; background: #fff; display: flex; align-items: center; justify-content: center; flex: none; }
.seq-body { display: flex; margin-top: 5px; height: 747px; }

.grid { width: 268px; flex: none; position: relative; font-size: 11px; }
.row { display: grid; grid-template-columns: 23px 20px 120px 40px 40px 25px; height: 20px; border-bottom: 1px solid #eee; }
.row > span { border-right: 1px solid #eaeaea; display: flex; align-items: center; min-width: 0; overflow: hidden; white-space: nowrap; }
.head { height: 24px; background: #efefef; font-weight: 700; font-size: 12px; color: #222; border-bottom: 1px solid #ddd; }
.head > span { border-right: 2px solid #fff; padding-left: 3px; }
.head .c1 { padding-left: 3px; }
.head .c5 { font-weight: 400; border: 0; padding-left: 4px; }
.sel > span { background: #d1e8ee; }
.sel .blank { background: #fff; }
.alt { background: #f9f9f9; }
.row .c0 { background: #efefef; justify-content: center; font: 11px "Liberation Serif", serif; color: #222; }
.row .c0.b { font-weight: 700; }
.head .c0 { background: none; }
.c1 { justify-content: center; }
.chk { width: 13px; height: 13px; border: 1px solid #444; background: #fff; position: relative; }
.chk::after { content: ""; position: absolute; left: 2px; top: 1px; width: 7px; height: 4px; border: solid #555; border-width: 0 0 1px 1px; transform: rotate(-45deg); }
.tree { padding-left: 3px; gap: 6px; }
.chev { margin-right: -1px; }
.root { font-size: 12px; margin-left: -3px; }
.leaf { padding-left: 24px; gap: 2px; }
.dots { width: 9px; height: 9px; border: dotted #999; border-width: 0 0 1px 1px; margin-top: -7px; flex: none; }
.mono { font: 10px "Liberation Mono", monospace; color: #222; padding-left: 6px; }
.op { padding-left: 0; }
.ell { letter-spacing: -2px; }
.num { justify-content: flex-end; padding-right: 3px; font: 10px "Liberation Mono", monospace; color: #222; }
.dimnum { color: #aaa; }
.grid-fill { height: 683px; background:
  linear-gradient(#e4e4e4, #e4e4e4) 22px 0/1px 100% no-repeat,
  linear-gradient(#ececec, #ececec) 42px 0/1px 100% no-repeat,
  linear-gradient(#ececec, #ececec) 162px 0/1px 100% no-repeat,
  linear-gradient(#ececec, #ececec) 202px 0/1px 100% no-repeat,
  linear-gradient(#ececec, #ececec) 242px 0/1px 100% no-repeat,
  repeating-linear-gradient(180deg, transparent 0 19px, #ececec 19px 20px),
  linear-gradient(#efefef, #efefef) 0 0/22px 100% no-repeat,
  repeating-linear-gradient(180deg, #fff 0 20px, #f9f9f9 20px 40px);
}
.hscroll { position: absolute; height: 3px; background: #c9c9c9; top: 744px; }
.h1 { left: 18px; width: 112px; }
.h2 { left: 18px; width: 217px; }

.timeline { width: 320px; flex: none; margin-left: 10px; position: relative; border-left: 1px solid #777; }
.ruler { height: 24px; background: #efefef; border-top: 2px solid #888; border-right: 2px solid #888; border-bottom: 2px solid #000; display: flex; font: 10px/16px "Liberation Sans", sans-serif; color: #222; overflow: hidden; box-shadow: inset 0 -2px 0 #888; position: relative; }
.ruler::after { content: ""; position: absolute; left: 0; right: 0; bottom: 2px; height: 6px; background:
  repeating-linear-gradient(90deg, #333 0 1px, transparent 1px 31.900px) 0 0/100% 6px no-repeat,
  repeating-linear-gradient(90deg, #333 0 1px, transparent 1px 31.900px) 16px 3px/100% 3px no-repeat; }
.ruler span { width: 31.900px; flex: none; transform: translateX(-3px); }
.tl-fill { height: 723px; position: relative; background:
  repeating-linear-gradient(90deg, #ececec 0 1px, transparent 1px 31.900px),
  repeating-linear-gradient(180deg, transparent 0 19px, #ececec 19px 20px),
  repeating-linear-gradient(180deg, #fff 0 20px, #f9f9f9 20px 40px);
}
.bar { width: 32px; border: 1px solid; box-shadow: 3px 3px 0 #b0b0b0; }
.b-gray { height: 15px; margin-top: 2px; border-color: #111; background: linear-gradient(#e8e8e8, #333); box-shadow: 3px 3px 0 #b0b0b0, 0 -2px 0 #2b8fe3; }
.b-blue { height: 16px; margin-top: 5px; border-color: #00007a; background: linear-gradient(#fff, #0000e0); }

.zoom-col { display: flex; flex-direction: column; gap: 2px; margin-left: 5px; margin-top: -1px; }

/* viewport */
.view { flex: 1; min-width: 0; display: flex; flex-direction: column; }
.doc-tabs { height: 26px; flex: none; border-bottom: 2px solid #02608a; }
.doc-tab { width: 132px; height: 24px; background: #02608a; color: #fff; display: flex; align-items: center; padding-left: 6px; font: 12.500px "Noto Sans", sans-serif; }
.doc-name { margin-left: 6px; }
.doc-pop { margin-left: 6px; }
.doc-x { margin-left: 6px; }
.canvas { flex: 1; position: relative; background: #fff; }
.model { position: absolute; left: 0; top: 0; }
.axis { position: absolute; font: 11px/12px "Liberation Sans", sans-serif; color: #1a1ae0; }
.ax-z1 { left: 366px; top: 395px; }
.ax-y1 { left: 461px; top: 484px; color: #d8d8d8; }
.ax-x1 { left: 468px; top: 563px; }
.tr-z { left: 104px; top: 632px; color: #2a58d8; }
.tr-y { left: 160px; top: 685px; color: #3a9a40; }
.tr-x { left: 164px; top: 730px; color: #d8404a; }

/* annotations */
.arrows { position: absolute; left: 0; top: 0; pointer-events: none; }
.arrows path { fill: #fb3d3d; }
.note { position: absolute; font-size: 19px; line-height: 24px; color: #fb4a4a; white-space: nowrap; }
.n1 { left: 75px; top: 398px; }
.n2 { left: 350px; top: 360px; }
.n3 { left: 184px; top: 601px; }
```
